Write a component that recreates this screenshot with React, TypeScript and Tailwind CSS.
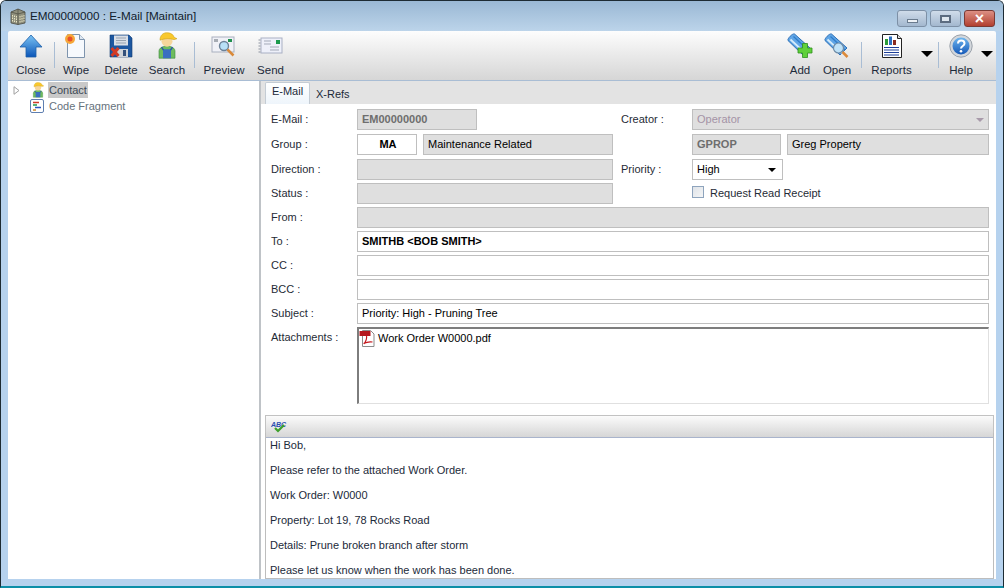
const BuildingIcon = () => (
  <svg width="16" height="18" viewBox="0 0 16 18">
    <path d="M1 5l7-3 7 3v11l-7 1.500-7-1.500z" fill="#8f8f7c" stroke="#4a4a40" strokeWidth="0.8" />
    <path d="M8 2v15.500M1 5l7 2 7-2" fill="none" stroke="#3f3f36" strokeWidth="0.6" />
    <path d="M2.500 8v7M4.500 8.500v7M6.500 9v7M10 9v7M12 8.500v7M14 8v7" stroke="#e8e4c4" strokeWidth="1" strokeDasharray="1.500 1" />
  </svg>
)

const CloseIcon = () => (
  <svg width="24" height="26" viewBox="0 0 24 26">
    <defs>
      <linearGradient id="closeUp" x1="0" y1="0" x2="0" y2="1">
        <stop offset="0" stopColor="#7cc4f4" />
        <stop offset="1" stopColor="#0a55b8" />
      </linearGradient>
    </defs>
    <path d="M12 2L23 14h-6v10H7V14H1z" fill="url(#closeUp)" stroke="#1e5fa8" strokeWidth="0.8" />
  </svg>
)

const WipeIcon = () => (
  <svg width="22" height="26" viewBox="0 0 22 26">
    <path d="M2.500 1.500h12l5 5v18h-17z" fill="#f6f9fd" stroke="#7e94ad" />
    <path d="M14.500 1.500v5h5" fill="#dfe8f2" stroke="#7e94ad" />
    <circle cx="5" cy="6" r="5" fill="#f5a83a" />
    <circle cx="5" cy="6" r="2.500" fill="#e8502a" />
  </svg>
)

const DeleteIcon = () => (
  <svg width="24" height="24" viewBox="0 0 24 24">
    <path d="M1 1h19l3 3v19H1z" fill="#1d57a0" stroke="#123a70" strokeWidth="0.6" />
    <rect x="5" y="1.500" width="14" height="10" fill="#d9dee6" />
    <path d="M7 4h10M7 6.500h10M7 9h10" stroke="#97a2b0" />
    <rect x="8" y="15" width="11" height="8" fill="#cfd3d8" />
    <rect x="14" y="16" width="3" height="6" fill="#33507a" />
    <path d="M2.500 14l7 8M9.500 14l-7 8" stroke="#d23a24" strokeWidth="3" />
  </svg>
)

const PersonIcon = ({ size = 24 }: { size?: number }) => (
  <svg width={size} height={size * 1.1} viewBox="0 0 24 26">
    <path d="M4 26v-7c0-3 3-5 8-5s8 2 8 5v7z" fill="#6dbb5e" stroke="#3d8a3d" strokeWidth="0.6" />
    <path d="M8 26v-9h8v9z" fill="#3a6fc0" />
    <path d="M6.500 15l2 3M17.500 15l-2 3" stroke="#2d5aa0" strokeWidth="1.500" />
    <circle cx="12" cy="9" r="5.500" fill="#f6d69a" />
    <path d="M5 8c0-5 3-7.500 7-7.500s6.500 2 7 4.500l3 1.500-3 1c-4-1.500-9-1.500-14 .5z" fill="#f9c82c" stroke="#c79a10" strokeWidth="0.5" />
  </svg>
)

const PreviewIcon = () => (
  <svg width="26" height="24" viewBox="0 0 26 24">
    <rect x="1" y="3" width="22" height="15" fill="#f0f1f7" stroke="#a9b0bf" />
    <path d="M17 5h4v3h-4z" fill="#1f8f4e" />
    <path d="M3 5h4v3H3z" fill="#a7acb4" />
    <circle cx="13" cy="12" r="4.500" fill="#b8e0f6" stroke="#6d8298" strokeWidth="1.400" />
    <path d="M16.500 15.500l6 6" stroke="#d98a3a" strokeWidth="2.500" />
  </svg>
)

const SendIcon = () => (
  <svg width="25" height="20" viewBox="0 0 25 20">
    <rect x="3" y="2" width="21" height="15" fill="#eef0fa" stroke="#a9b0c4" />
    <rect x="18" y="4" width="4" height="4" fill="#1c9a4e" />
    <path d="M6 5h7M6 8h7M12 11h9M12 14h9" stroke="#a3a9b8" />
    <path d="M0.500 4h2M0.500 7h2M0.500 10h2M0.500 13h2M0.500 16h2" stroke="#8c93a0" />
  </svg>
)

// thick tilted paper clip shared by Add and Open
const ClipBase = () => (
  <g>
    <path d="M1 7.500C0 6 5.500 0 7.500 1L23 15l-7 7z" fill="#5fa5e6" stroke="#2d6fb5" />
    <path d="M3.500 6.500L18 20" stroke="#d6ecfb" strokeWidth="1.800" />
    <path d="M6.500 3.500L21 17" stroke="#2f7cc9" strokeWidth="1.200" />
  </g>
)

const AddIcon = () => (
  <svg width="26" height="26" viewBox="0 0 26 26">
    <ClipBase />
    <path d="M15.500 10.500h5v4.500h4.500v5h-4.500v4.500h-5V20H11v-5h4.500z" fill="#5fd03a" stroke="#2f8f1d" strokeWidth="0.8" />
  </svg>
)

const OpenIcon = () => (
  <svg width="26" height="26" viewBox="0 0 26 26">
    <ClipBase />
    <circle cx="14.500" cy="15" r="5" fill="#bfe2f8" stroke="#6e8ba6" strokeWidth="1.200" />
    <path d="M18.500 19l5 5" stroke="#dd8b3b" strokeWidth="2.500" />
  </svg>
)

const ReportsIcon = () => (
  <svg width="20" height="24" viewBox="0 0 20 24">
    <path d="M0.500 0.500h15l4 4v19h-19z" fill="#fff" stroke="#222" />
    <path d="M15.500 0.500v4h4" fill="#ddd" stroke="#222" />
    <rect x="3" y="5" width="3" height="6" fill="#2c9c38" />
    <rect x="7" y="2.500" width="3" height="8.500" fill="#2d6fc0" />
    <rect x="11" y="6" width="3" height="5" fill="#8a2a20" />
    <path d="M2 13.500h15M2 16h15M2 18.500h15M2 21h15" stroke="#1d3f9a" strokeWidth="1.200" />
  </svg>
)

const HelpIcon = () => (
  <svg width="24" height="24" viewBox="0 0 24 24">
    <defs>
      <linearGradient id="helpBall" x1="0" y1="0" x2="0" y2="1">
        <stop offset="0" stopColor="#6fb6ef" />
        <stop offset="1" stopColor="#1458b8" />
      </linearGradient>
    </defs>
    <circle cx="12" cy="12" r="11.200" fill="#d3d7dc" stroke="#9aa1aa" />
    <circle cx="12" cy="12" r="8.500" fill="url(#helpBall)" />
    <path d="M9 9.500c0-4 6.500-4 6.500 0 0 2.500-3.500 2.500-3.500 5" fill="none" stroke="#fff" strokeWidth="2" />
    <circle cx="12" cy="17.300" r="1.300" fill="#fff" />
  </svg>
)

const CodeIcon = () => (
  <svg width="14" height="14" viewBox="0 0 14 14">
    <rect x="0.500" y="0.500" width="13" height="13" rx="1.500" fill="#fff" stroke="#5f7fb0" />
    <path d="M3 3.500h6" stroke="#d03a2a" strokeWidth="1.300" />
    <path d="M3 6h4" stroke="#1f9a4a" strokeWidth="1.300" />
    <path d="M5 8.500h6" stroke="#2a55c0" strokeWidth="1.300" />
    <path d="M3 11h3" stroke="#d08a2a" strokeWidth="1.300" />
  </svg>
)

const PdfIcon = () => (
  <svg width="16" height="17" viewBox="0 0 16 17">
    <path d="M3.500 0.500h8l3.500 3.500v12.500h-11.500z" fill="#fff" stroke="#8b8b8b" />
    <rect x="0.500" y="1" width="11" height="5" fill="#b4161c" />
    <path d="M5 14c2-3 3-6 2.500-8M4.500 13.500c3-1.500 6-2 9-1.500" fill="none" stroke="#c4161c" strokeWidth="1.200" />
  </svg>
)

const SpellIcon = () => (
  <svg width="16" height="13" viewBox="0 0 16 13">
    <text x="0" y="7" fontSize="7" fontWeight="700" fontStyle="italic" fill="#2a4fb0" fontFamily="Liberation Sans">ABC</text>
    <path d="M4 8l3 3 6-6" fill="none" stroke="#3da02c" strokeWidth="2.200" />
  </svg>
)

const ToolButton = ({ label, width, children }: { label: string; width: string; children: React.ReactNode }) => (
  <div className={`flex flex-col items-center ${width}`}>
    <div className="h-[29px] flex items-center justify-center">{children}</div>
    <span className="text-[11.500px] leading-[14px] mt-[3px] text-[#1c2a3a]">{label}</span>
  </div>
)

const Sep = () => <div className="w-px h-[26px] bg-[#a9bdd4] mt-[11px]" />

const Caret = () => <div className="mt-[20px] w-0 h-0 border-x-[6px] border-x-transparent border-t-[6px] border-t-black" />

const field = "h-[21px] border border-[#bfbfbf] text-[11px] leading-[19px] px-1"
const readOnly = `${field} bg-[#dfdfdf]`
const input = `${field} bg-white`

const Label = ({ children, className = "" }: { children: React.ReactNode; className?: string }) => (
  <div className={`text-[11px] leading-[21px] text-[#1f2b36] ${className}`}>{children}</div>
)

const Row = ({ label, bold, children }: { label: string; bold?: boolean; children?: React.ReactNode }) => (
  <div className="flex">
    <Label className="w-[86px] shrink-0">{label}</Label>
    <div className={`${input} flex-1 ${bold ? "font-bold text-[11.300px]" : ""}`}>{children}</div>
  </div>
)

export default function App() {
  return (
    <div className="w-[1004px] h-[588px] overflow-hidden flex flex-col rounded-t-[6px] border-x border-t border-[#1d2b33] border-b-2 border-b-[#0d8fa8] bg-[#b6d2ee] font-['Liberation_Sans',sans-serif]">
      {/* title bar */}
      <div className="h-[30px] shrink-0 flex items-center pl-[9px] pr-[8px] bg-gradient-to-b from-[#9ab8d4] to-[#bcd4ea]">
        <BuildingIcon />
        <span className="ml-[4px] text-[11.700px] text-[#10202c]">EM00000000 : E-Mail [Maintain]</span>
        <div className="ml-auto flex gap-[3px] mt-[9px] self-start">
          <div className="w-[30px] h-[17px] rounded-[3px] border border-[#7d90a6] bg-gradient-to-b from-[#d0dcea] to-[#a3b8cf] flex items-center justify-center">
            <div className="w-[11px] h-[4px] mt-[4px] bg-[#eef2f6] border border-[#6a7b8e]" />
          </div>
          <div className="w-[31px] h-[17px] rounded-[3px] border border-[#7d90a6] bg-gradient-to-b from-[#d0dcea] to-[#a3b8cf] flex items-center justify-center">
            <div className="w-[11px] h-[8px] border-2 border-[#5c6c80] bg-[#dfe7ef]" />
          </div>
          <div className="w-[31px] h-[17px] rounded-[3px] border border-[#7a3a34] bg-gradient-to-b from-[#dc8f84] to-[#b23f30] flex items-center justify-center text-white text-[16px] font-bold leading-none">
            ×
          </div>
        </div>
      </div>

      <div className="flex-1 min-h-0 flex flex-col mx-[7px]">
        {/* toolbar */}
        <div className="h-[50px] shrink-0 flex bg-gradient-to-b from-[#fdfdfd] to-[#d6d6d6] border-b border-[#a9bdd4] rounded-t-[2px]">
          <ToolButton label="Close" width="w-[46px]"><CloseIcon /></ToolButton>
          <Sep />
          <ToolButton label="Wipe" width="w-[42px]"><WipeIcon /></ToolButton>
          <ToolButton label="Delete" width="w-[48px]"><DeleteIcon /></ToolButton>
          <ToolButton label="Search" width="w-[44px]"><PersonIcon /></ToolButton>
          <div className="w-[5px]" />
          <Sep />
          <ToolButton label="Preview" width="w-[58px]"><PreviewIcon /></ToolButton>
          <ToolButton label="Send" width="w-[35px]"><SendIcon /></ToolButton>
          <div className="flex-1" />
          <ToolButton label="Add" width="w-[36px]"><AddIcon /></ToolButton>
          <ToolButton label="Open" width="w-[38px]"><OpenIcon /></ToolButton>
          <div className="w-[5px]" />
          <Sep />
          <ToolButton label="Reports" width="w-[59px]"><ReportsIcon /></ToolButton>
          <Caret />
          <div className="w-[5px]" />
          <Sep />
          <ToolButton label="Help" width="w-[44px]"><HelpIcon /></ToolButton>
          <div className="-ml-[2px] mr-[3px]"><Caret /></div>
        </div>

        <div className="flex-1 min-h-0 flex">
          {/* tree */}
          <div className="w-[251px] shrink-0 bg-white pt-[1px] text-[11px] text-[#66727c]">
            <div className="flex items-center h-[16px]">
              <svg className="ml-[5px]" width="7" height="9" viewBox="0 0 7 9">
                <path d="M1 0.700v7.600L6 4.500z" fill="#fff" stroke="#a0a0a0" />
              </svg>
              <div className="ml-[11px] w-[18px]"><PersonIcon size={14} /></div>
              <span className="bg-[#c9c9c9] px-[1px] leading-[16px] text-[#3d4a56] -ml-[1px]">Contact</span>
            </div>
            <div className="flex items-center h-[16px]">
              <div className="ml-[22px] w-[19px]"><CodeIcon /></div>
              <span className="leading-[16px]">Code Fragment</span>
            </div>
          </div>
          <div className="w-[2px] shrink-0 bg-[#bfc3c7]" />

          {/* main panel */}
          <div className="flex-1 min-w-0 flex flex-col bg-white">
            <div className="h-[23px] shrink-0 flex bg-[#e3e3e3] pl-[4px] pt-px text-[11px] text-[#1c2a3a]">
              <div className="w-[45px] h-[22px] bg-gradient-to-b from-white to-[#eef5fb] border border-b-0 border-[#c4ccd4] rounded-t-[2px] text-center leading-[16px]">E-Mail</div>
              <div className="ml-[6px] leading-[24px]">X-Refs</div>
            </div>

            <div className="flex flex-col gap-[3px] pl-[10px] pr-[7px] pt-[5px]">
              <div className="grid grid-cols-[86px_256px_8px_71px_297px] grid-rows-[25px_25px_24px_21px]">
                <Label>E-Mail :</Label>
                <div><div className={`${readOnly} w-[120px] font-bold text-[11.700px] text-[#6e6e6e]`}>EM00000000</div></div>
                <div />
                <Label>Creator :</Label>
                <div className={`${readOnly} flex items-center justify-between text-[#a493a6]`}>
                  <span>Operator</span>
                  <div className="w-0 h-0 border-x-[4px] border-x-transparent border-t-[4px] border-t-[#a89aaa]" />
                </div>

                <Label>Group :</Label>
                <div className="flex gap-[6px]">
                  <div className={`${input} w-[60px] font-bold text-center text-black pl-[6px]`}>MA</div>
                  <div className={`${readOnly} flex-1`}>Maintenance Related</div>
                </div>
                <div />
                <div />
                <div className="flex gap-[6px]">
                  <div className={`${readOnly} w-[89px] font-bold text-[#6e6e6e] text-[11.700px]`}>GPROP</div>
                  <div className={`${readOnly} flex-1`}>Greg Property</div>
                </div>

                <Label>Direction :</Label>
                <div className={readOnly} />
                <div />
                <Label>Priority :</Label>
                <div>
                  <div className={`${input} w-[91px] flex items-center justify-between`}>
                    <span>High</span>
                    <div className="w-0 h-0 mr-[2px] border-x-[4px] border-x-transparent border-t-[4px] border-t-black" />
                  </div>
                </div>

                <Label>Status :</Label>
                <div className={readOnly} />
                <div />
                <div />
                <div className="flex items-start">
                  <div className="w-[12px] h-[12px] mt-[3px] border border-[#8ea4bd] bg-gradient-to-br from-[#dfe3e8] to-[#f4f5f6]" />
                  <span className="ml-[6px] mt-[3px] text-[11px] leading-[14px] text-[#1f2b36]">Request Read Receipt</span>
                </div>
              </div>

              <div className="flex">
                <Label className="w-[86px] shrink-0">From :</Label>
                <div className={`${readOnly} flex-1`} />
              </div>
              <Row label="To :" bold>SMITHB &lt;BOB SMITH&gt;</Row>
              <Row label="CC :" />
              <Row label="BCC :" />
              <Row label="Subject :">Priority: High - Pruning Tree</Row>
              <div className="flex">
                <Label className="w-[86px] shrink-0">Attachments :</Label>
                <div className="flex-1 h-[77px] border border-[#e0e0e0] border-l-2 border-t-2 border-l-[#7d7d7d] border-t-[#7d7d7d] flex items-start gap-[3px] text-[11px] pt-px">
                  <PdfIcon />
                  <span className="leading-[16px]">Work Order W0000.pdf</span>
                </div>
              </div>
            </div>

            {/* editor */}
            <div className="flex-1 min-h-0 flex flex-col ml-[4px] mr-[2px] mt-[11px]">
              <div className="h-[23px] shrink-0 flex items-center pl-[5px] bg-gradient-to-b from-[#fbfbfb] to-[#d6d6d6] border-t border-x border-[#c2c2c2] border-b border-b-[#a9b4cc]">
                <SpellIcon />
              </div>
              <div className="flex-1 min-h-0 overflow-hidden border-x border-b border-[#bdbdbd] pl-[4px] text-[11px] text-[#1c2a3a] leading-[25px] -mt-[5px]">
                <p>Hi Bob,</p>
                <p>Please refer to the attached Work Order.</p>
                <p>Work Order: W0000</p>
                <p>Property: Lot 19, 78 Rocks Road</p>
                <p>Details: Prune broken branch after storm</p>
                <p>Please let us know when the work has been done.</p>
              </div>
            </div>
          </div>
        </div>
      </div>
      <div className="h-[7px] shrink-0" />
    </div>
  )
}
